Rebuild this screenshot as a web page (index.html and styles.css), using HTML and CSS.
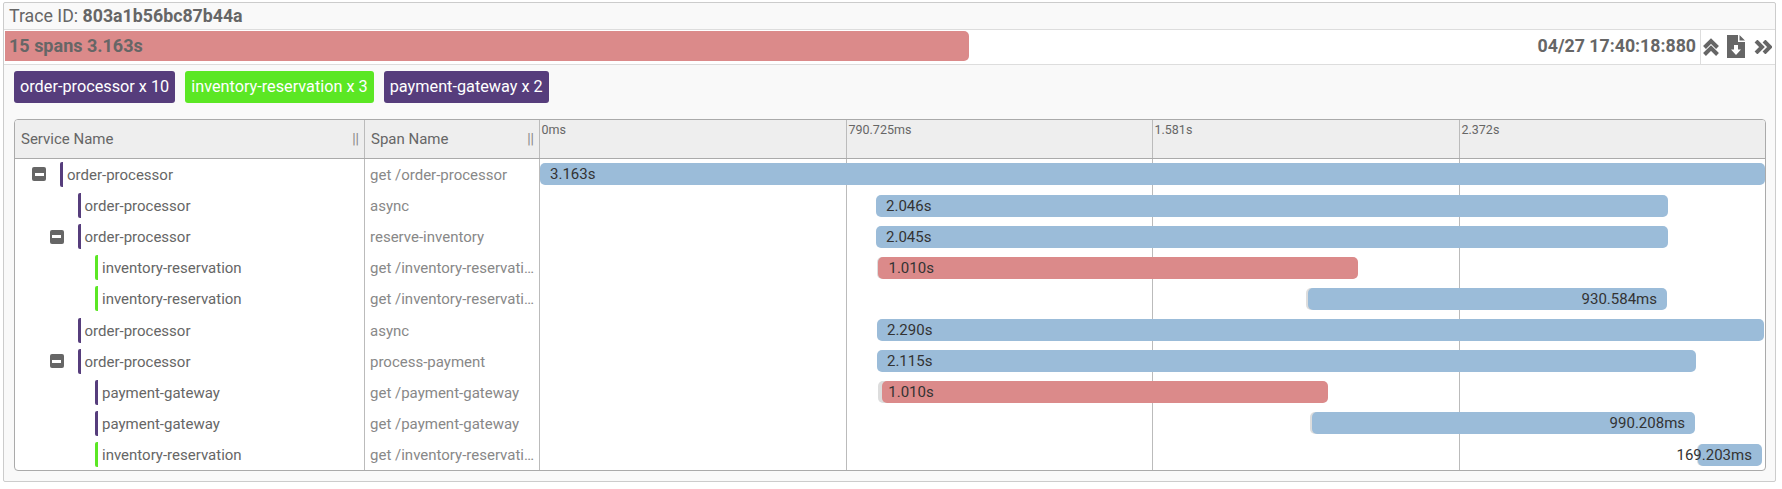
FILE: index.html
```html
<!DOCTYPE html>
<html lang="en">
<head>
<meta charset="utf-8">
<title>Trace 803a1b56bc87b44a</title>
<link rel="stylesheet" href="styles.css">
</head>
<body>
<section class="panel">
  <header class="title">Trace ID: <strong>803a1b56bc87b44a</strong></header>
  <div class="summary">
    <div class="summary-track"><div class="summary-bar">15 spans 3.163s</div></div>
    <span class="stamp">04/27 17:40:18:880</span>
    <div class="summary-side">
      <svg class="ico up" viewBox="0 0 16 18"><path d="M1.500 9.500 8 3l6.500 6.500M1.500 16.500 8 10l6.500 6.500"/></svg>
      <svg class="ico file" viewBox="0 0 18 23"><path class="solid" fill-rule="evenodd" d="M0 0h11v7h7v16H0zM12.500 0 18 5.500h-5.500z"/><path class="arrow" d="M7 10h4v4.500h3L9 20l-5-5.500h3z"/></svg>
      <svg class="ico right" viewBox="0 0 18 14"><path d="M2 1l6 6-6 6M10 1l6 6-6 6"/></svg>
    </div>
  </div>
  <div class="pills">
    <span class="pill purple">order-processor x 10</span>
    <span class="pill green">inventory-reservation x 3</span>
    <span class="pill purple">payment-gateway x 2</span>
  </div>
  <div class="table">
    <div class="row head">
      <div class="hcell">Service Name<span class="grip">||</span></div>
      <div class="hcell">Span Name<span class="grip">||</span></div>
      <div class="axis">
        <span class="tick">0ms</span><span class="tick">790.725ms</span><span class="tick">1.581s</span><span class="tick">2.372s</span>
      </div>
    </div>

    <div class="row">
      <div class="tree lv1"><span class="slot"><span class="toggle"></span></span><span class="svc purple-line">order-processor</span></div>
      <div class="span-name">get /order-processor</div>
      <div class="lane"><div class="bar blue" style="margin-left:0;width:100%">3.163s</div></div>
    </div>
    <div class="row">
      <div class="tree lv2"><span class="slot"></span><span class="svc purple-line">order-processor</span></div>
      <div class="span-name">async</div>
      <div class="lane"><div class="bar blue" style="margin-left:27.43%;width:64.65%">2.046s</div></div>
    </div>
    <div class="row">
      <div class="tree lv2"><span class="slot"><span class="toggle"></span></span><span class="svc purple-line">order-processor</span></div>
      <div class="span-name">reserve-inventory</div>
      <div class="lane"><div class="bar blue" style="margin-left:27.43%;width:64.65%">2.045s</div></div>
    </div>
    <div class="row">
      <div class="tree lv3"><span class="slot"></span><span class="svc green-line">inventory-reservation</span></div>
      <div class="span-name">get /inventory-reservation</div>
      <div class="lane"><div class="bar red lead-1" style="margin-left:27.63%;width:39.14%">1.010s</div></div>
    </div>
    <div class="row">
      <div class="tree lv3"><span class="slot"></span><span class="svc green-line">inventory-reservation</span></div>
      <div class="span-name">get /inventory-reservation</div>
      <div class="lane"><div class="bar blue lead-2 end" style="margin-left:62.66%;width:29.34%">930.584ms</div></div>
    </div>
    <div class="row">
      <div class="tree lv2"><span class="slot"></span><span class="svc purple-line">order-processor</span></div>
      <div class="span-name">async</div>
      <div class="lane"><div class="bar blue" style="margin-left:27.51%;width:72.41%">2.290s</div></div>
    </div>
    <div class="row">
      <div class="tree lv2"><span class="slot"><span class="toggle"></span></span><span class="svc purple-line">order-processor</span></div>
      <div class="span-name">process-payment</div>
      <div class="lane"><div class="bar blue" style="margin-left:27.51%;width:66.86%">2.115s</div></div>
    </div>
    <div class="row">
      <div class="tree lv3"><span class="slot"></span><span class="svc purple-line">payment-gateway</span></div>
      <div class="span-name">get /payment-gateway</div>
      <div class="lane"><div class="bar red lead-4" style="margin-left:27.94%;width:36.38%">1.010s</div></div>
    </div>
    <div class="row">
      <div class="tree lv3"><span class="slot"></span><span class="svc purple-line">payment-gateway</span></div>
      <div class="span-name">get /payment-gateway</div>
      <div class="lane"><div class="bar blue lead-2 end" style="margin-left:63.02%;width:31.27%">990.208ms</div></div>
    </div>
    <div class="row">
      <div class="tree lv3"><span class="slot"></span><span class="svc green-line">inventory-reservation</span></div>
      <div class="span-name">get /inventory-reservation</div>
      <div class="lane"><div class="bar blue lead-1 end" style="margin-left:94.53%;width:5.22%">169.203ms</div></div>
    </div>
  </div>
</section>
</body>
</html>
```
FILE: styles.css
```css
* { box-sizing: border-box; }
html, body { margin: 0; background: #fff; }
body {
  padding: 2px 6px 7px 3px;
  font-family: Roboto, "Liberation Sans", sans-serif;
  font-size: 15px;
  color: #666;
}
.panel {
  border: 1px solid #ccc;
  background: #f9f9f9;
  border-radius: 2px;
  padding-bottom: 10px;
}
.title {
  height: 27px;
  padding-left: 5px;
  font-size: 17.750px;
  line-height: 26px;
  border-bottom: 1px solid #ddd;
}
.title strong { font-weight: 700; }
.summary {
  display: flex;
  align-items: flex-start;
  height: 35px;
  background: #fff;
  border-bottom: 1px solid #ddd;
}
.summary-track { flex: 1; padding: 1px 0 0 1px; }
.summary-bar {
  width: 964px;
  height: 30px;
  padding-left: 4px;
  background: #db8a8a;
  border-radius: 0 5px 5px 0;
  font-size: 18px;
  font-weight: 700;
  line-height: 29px;
}
.stamp {
  padding-right: 4px;
  font-size: 17.750px;
  font-weight: 700;
  line-height: 32px;
  white-space: nowrap;
}
.summary-side {
  display: flex;
  align-items: center;
  align-self: stretch;
  flex: none;
  width: 75px;
  border-left: 1px solid #ddd;
}
.ico { display: block; flex: none; }
.ico path { fill: none; stroke: #666; stroke-width: 4; stroke-linecap: butt; }
.ico path.solid { fill: #666; stroke: none; }
.ico path.arrow { fill: #fff; stroke: none; }
.up { width: 16px; height: 18px; margin-left: 2px; }
.file { width: 18px; height: 23px; margin-left: 8px; margin-top: -1px; }
.right { width: 18px; height: 14px; margin-left: 9px; }
.pills { display: flex; gap: 10px; padding: 6px 0 16px 10px; }
.pill {
  height: 32px;
  padding: 0 6px;
  border-radius: 3px;
  font-size: 16.250px;
  line-height: 31px;
  color: #fff;
  white-space: nowrap;
}
.purple { background: #563d7c; }
.green { background: #5be724; }
.table {
  margin: 0 9px 0 10px;
  border: 1px solid #aaa;
  border-radius: 4px;
  background: #fff;
  overflow: hidden;
}
.row {
  display: grid;
  grid-template-columns: 350px 175px 1fr;
  height: 31.150px;
}
.row.head {
  height: 38.800px;
  background: #eee;
  border-bottom: 1px solid #aaa;
}
.hcell {
  display: flex;
  justify-content: space-between;
  padding: 0 5px 0 6px;
  border-right: 1px solid #bbb;
  line-height: 38px;
}
.grip { color: #888; font-size: 14px; }
.axis { display: grid; grid-template-columns: 306px 306px 307px 1fr; }
.tick {
  padding: 2px 0 0 1.500px;
  font-size: 12.500px;
  line-height: 16px;
  border-left: 1px solid #bbb;
}
.tick:first-child { border-left: 0; }
.tree { display: flex; align-items: center; border-right: 1px solid #bbb; }
.lv1 { padding-left: 17px; }
.lv2 { padding-left: 34.500px; }
.lv3 { padding-left: 52px; }
.slot { width: 28px; flex: none; }
.toggle {
  display: block;
  position: relative;
  width: 14px;
  height: 14px;
  background: #666;
  border-radius: 2px;
}
.toggle::after {
  content: "";
  position: absolute;
  left: 2.500px;
  right: 2.500px;
  top: 5.500px;
  height: 3px;
  background: #fff;
}
.svc {
  height: 25px;
  padding-left: 4px;
  line-height: 26px;
  white-space: nowrap;
  border-left: 3.500px solid;
  border-radius: 2px;
}
.purple-line { border-left-color: #563d7c; }
.green-line { border-left-color: #5be724; }
.span-name {
  padding: 0 2px 0 5px;
  border-right: 1px solid #bbb;
  color: #888;
  line-height: 32px;
  white-space: nowrap;
  overflow: hidden;
  text-overflow: ellipsis;
}
.lane {
  display: flex;
  align-items: center;
  background:
    linear-gradient(#bbb, #bbb) no-repeat 306px 0 / 1px 100%,
    linear-gradient(#bbb, #bbb) no-repeat 612px 0 / 1px 100%,
    linear-gradient(#bbb, #bbb) no-repeat 919px 0 / 1px 100%;
  min-width: 0;
}
.bar {
  display: flex;
  align-items: center;
  flex: none;
  height: 22px;
  padding: 0 10px;
  border-radius: 5px;
  color: #333;
  white-space: nowrap;
}
.blue { background: #9bbcd9; }
.red { background: #db8a8a; }
.end { justify-content: flex-end; padding-left: 0; }
.lead-1 { box-shadow: -1px 0 0 #ddd; }
.lead-2 { box-shadow: -2px 0 0 #ddd; }
.lead-4 { box-shadow: -4px 0 0 #ddd; padding-left: 6px; }
```
